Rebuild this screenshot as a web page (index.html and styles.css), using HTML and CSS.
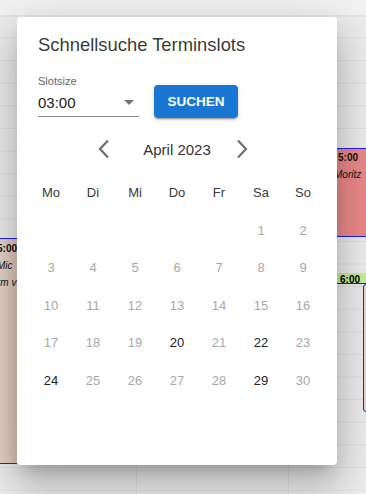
FILE: index.html
```html
<!DOCTYPE html>
<html lang="de">
<head>
  <meta charset="UTF-8" />
  <meta name="viewport" content="width=device-width, initial-scale=1.0"/>
  <title>Schnellsuche Terminslots</title>
  <link rel="stylesheet" href="styles.css">
</head>
<body>

  <div class="calendar-bg">
    <div class="bg-head"></div>
    <div class="event event-left">
      <b>5:00</b>
      <i>Mic</i>
      <i>rm v</i>
    </div>
    <div class="event event-red">
      <b>5:00</b>
      <i>Moritz</i>
    </div>
    <div class="event-green"><b>6:00</b></div>
    <div class="event-box"></div>
  </div>

  <div class="dialog">
    <h2 class="dialog-title">Schnellsuche Terminslots</h2>

    <div class="search-row">
      <div class="select">
        <label>Slotsize</label>
        <div class="select-value">
          <span>03:00</span>
          <span class="arrow"></span>
        </div>
      </div>
      <button class="btn">SUCHEN</button>
    </div>

    <div class="month-nav">
      <svg class="chev" width="14" height="20" viewBox="0 0 14 20"><path d="M11 1.5 3 10l8 8.5" fill="none" stroke="#707070" stroke-width="2.3"/></svg>
      <span class="month">April 2023</span>
      <svg class="chev" width="14" height="20" viewBox="0 0 14 20"><path d="M3 1.5l8 8.5-8 8.5" fill="none" stroke="#707070" stroke-width="2.3"/></svg>
    </div>

    <div class="days" id="days"></div>
  </div>

  <script>
    const days = document.getElementById("days");
    const names = ["Mo", "Di", "Mi", "Do", "Fr", "Sa", "So"];
    const active = [20, 22, 24, 29];

    names.forEach(n => {
      days.innerHTML += '<span class="wd">' + n + '</span>';
    });

    // April 2023 starts on a Saturday
    for (let i = 0; i < 5; i++) {
      days.innerHTML += '<span class="day"></span>';
    }
    for (let d = 1; d <= 30; d++) {
      const cls = active.includes(d) ? "day on" : "day";
      days.innerHTML += '<span class="' + cls + '">' + d + '</span>';
    }
  </script>

</body>
</html>
```

FILE: styles.css
```css
body {
  margin: 0;
  font-family: "Liberation Sans", Arial, sans-serif;
  background-color: #ececec;
  height: 494px;
  overflow: hidden;
  position: relative;
}

.calendar-bg {
  position: absolute;
  inset: 0;
  background-image:
    linear-gradient(#e2e2e2 1px, transparent 1px),
    linear-gradient(90deg, #e0e0e0 1px, transparent 1px);
  background-size: 100% 22.6px, 152px 100%;
  background-position: 0 15px, 136px 0;
  background-color: #eeeeee;
}

.bg-head {
  position: absolute;
  left: 0;
  right: 0;
  top: 0;
  height: 15px;
  background: #f3f3f3;
  border-bottom: 2px solid #e6e6e6;
}

.event {
  position: absolute;
  font-size: 10px;
  line-height: 17px;
  color: #111;
  display: flex;
  flex-direction: column;
  border-top: 1px solid #2020ff;
  border-bottom: 1px solid #2020ff;
  overflow: hidden;
  white-space: nowrap;
}

.event-left {
  left: 0;
  width: 17px;
  top: 238px;
  height: 223px;
  background: linear-gradient(90deg, #e8d6c9, #dcc6b8);
  text-indent: -3px;
  padding-top: 1px;
}

.event-red {
  left: 337px;
  right: 0;
  top: 148px;
  height: 87px;
  background: #ec8a8a;
}

.event-red b {
  margin-left: 1px;
}

.event-red i {
  margin-left: -3px;
}

.event-green {
  position: absolute;
  left: 337px;
  right: 0;
  top: 273px;
  height: 10px;
  background: #c5ef9a;
  border-bottom: 1px solid #2020ff;
  font-size: 10px;
  line-height: 14px;
  padding-left: 3px;
  overflow: hidden;
}

.event-box {
  position: absolute;
  left: 363px;
  width: 10px;
  top: 284px;
  height: 126px;
  border: 1px solid #2020ff;
  border-radius: 3px;
  background: #e9d9ce;
}

.dialog {
  position: absolute;
  left: 17px;
  top: 17px;
  width: 320px;
  height: 448px;
  box-sizing: border-box;
  background: white;
  border-radius: 4px;
  padding: 0 13px;
  box-shadow: 0 11px 15px -7px rgba(0, 0, 0, 0.2), 0 24px 38px 3px rgba(0, 0, 0, 0.14), 0 9px 46px 8px rgba(0, 0, 0, 0.12);
}

.dialog-title {
  margin: 0;
  padding: 16px 8px 0;
  font-size: 18.4px;
  font-weight: 400;
  line-height: 24px;
  color: rgba(0, 0, 0, 0.8);
}

.search-row {
  display: flex;
  align-items: flex-end;
  gap: 15px;
  padding: 18px 8px 0;
}

.select {
  width: 101px;
  border-bottom: 1px solid #8a8a8a;
}

.select label {
  display: block;
  font-size: 11px;
  line-height: 13px;
  color: #666;
}

.select-value {
  display: flex;
  justify-content: space-between;
  align-items: center;
  height: 28px;
  font-size: 15px;
  color: #222;
}

.arrow {
  width: 0;
  height: 0;
  border-left: 5px solid transparent;
  border-right: 5px solid transparent;
  border-top: 5px solid #757575;
  margin-right: 5px;
}

.btn {
  width: 84px;
  height: 33px;
  margin-bottom: -1px;
  border: none;
  border-radius: 4px;
  background: #1976d2;
  color: white;
  font-family: "Liberation Sans", Arial, sans-serif;
  font-size: 13.5px;
  font-weight: 700;
  cursor: pointer;
  box-shadow: 0 3px 1px -2px rgba(0, 0, 0, 0.2), 0 2px 2px 0 rgba(0, 0, 0, 0.14), 0 1px 5px 0 rgba(0, 0, 0, 0.12);
}

.month-nav {
  display: flex;
  align-items: center;
  justify-content: center;
  padding-right: 8px;
  margin-top: 20px;
  height: 24px;
}

.month {
  margin: 0 24px 0 32px;
  font-size: 15px;
  color: #333;
}

.days {
  display: grid;
  grid-template-columns: repeat(7, 42px);
  grid-auto-rows: 37.5px;
  margin-top: 13px;
}

.days span {
  display: flex;
  align-items: center;
  justify-content: center;
  font-size: 13px;
  color: #a8a8a8;
}

.days .wd {
  color: #3a3a3a;
}

.days .on {
  color: #222;
}
```
